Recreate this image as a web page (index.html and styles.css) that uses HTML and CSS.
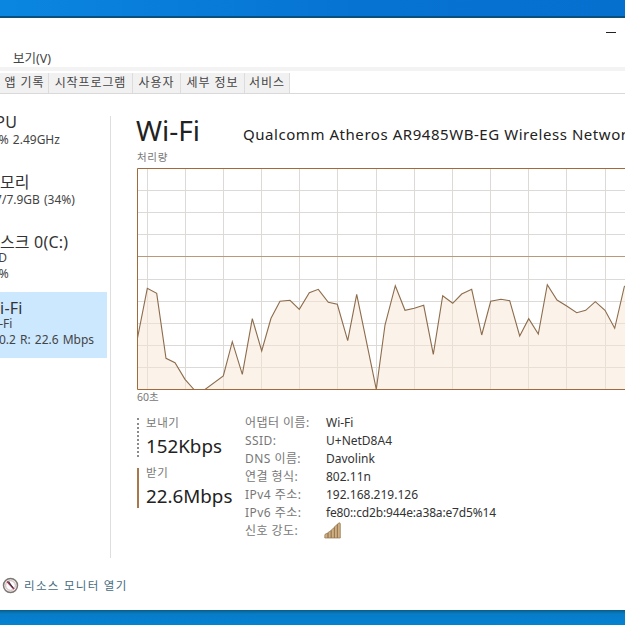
FILE: index.html
```html
<!DOCTYPE html>
<html lang="ko">
<head>
<meta charset="utf-8">
<title>작업 관리자</title>
<link rel="stylesheet" href="styles.css">
</head>
<body>
<div class="desk-top"></div>
<div class="window">
  <div class="titlebar"><span class="minimize"></span></div>
  <div class="menu"><span>보기(V)</span></div>
  <div class="menu-rule"></div>
  <div class="tabs">
    <span class="tab tab-first">앱 기록</span>
    <span class="tab tab-start">시작프로그램</span>
    <span class="tab tab-users">사용자</span>
    <span class="tab tab-detail">세부 정보</span>
    <span class="tab tab-service">서비스</span>
  </div>
  <div class="main">
    <aside class="side">
      <div class="items">
        <div class="item">
          <div class="item-title">CPU</div>
          <div class="item-sub">19% 2.49GHz</div>
        </div>
        <div class="item">
          <div class="item-title">메모리</div>
          <div class="item-sub">2.7/7.9GB (34%)</div>
        </div>
        <div class="item item-disk">
          <div class="item-title item-title-tight">디스크 0(C:)</div>
          <div class="item-sub">SSD</div>
          <div class="item-sub">10%</div>
        </div>
        <div class="item item-selected">
          <div class="item-title item-title-tight">Wi-Fi</div>
          <div class="item-sub">Wi-Fi</div>
          <div class="item-sub">S: 0.2 R: 22.6 Mbps</div>
        </div>
      </div>
    </aside>
    <section class="content">
      <header class="head">
        <h1>Wi-Fi</h1>
        <div class="adapter">Qualcomm Atheros AR9485WB-EG Wireless Network Adapter</div>
      </header>
      <div class="chart-label">처리량</div>
      <svg class="chart" width="488" height="223" viewBox="137 168 488 223" aria-hidden="true">
        <rect x="137.5" y="168.5" width="500" height="221" fill="#fff"/>
        <g class="grid">
          <path d="M147.5 168V390M185.5 168V390M223.5 168V390M261.5 168V390M299.5 168V390M337.5 168V390M376.5 168V390M414.5 168V390M452.5 168V390M490.5 168V390M528.5 168V390M566.5 168V390M605.5 168V390"/>
          <path d="M137 190.5H625M137 212.5H625M137 234.5H625M137 279.5H625M137 301.5H625M137 323.5H625M137 345.5H625M137 367.5H625"/>
        </g>
        <path class="mid" d="M137 256.5H625"/>
        <path class="area" d="M137.5 389.5V338L147.3 288.3L156.7 293.3L166 358.3L175 362.7L185 379.3L194 389.5L205 389.5L223.3 376L232.3 341.7L242.3 374.3L252.3 318.7L261.7 351L271 318.3L280 301.3L290 300.3L299.3 309.3L309.3 292.7L318.3 289.3L328.3 302.3L337.3 304.3L347.7 340.7L356.7 294.3L376.3 389.3L385 325L395.3 285.7L405 310.3L414.3 308.3L423.7 305.3L433.3 354.3L442.7 295.7L452.7 303.3L461.7 294L471.7 289.3L481.7 335L490.7 301.3L501 299.3L509.7 300.7L519.7 336L528.7 318.7L538.3 334L547.3 284.7L557 300L566.7 306L576.7 312.7L585.7 310.3L595.3 301.7L605 310.3L614.7 328.3L624.3 286.7L625 286V389.5Z"/>
        <path class="line" d="M137.5 338L147.3 288.3L156.7 293.3L166 358.3L175 362.7L185 379.3L194 389.5L205 389.5L223.3 376L232.3 341.7L242.3 374.3L252.3 318.7L261.7 351L271 318.3L280 301.3L290 300.3L299.3 309.3L309.3 292.7L318.3 289.3L328.3 302.3L337.3 304.3L347.7 340.7L356.7 294.3L376.3 389.3L385 325L395.3 285.7L405 310.3L414.3 308.3L423.7 305.3L433.3 354.3L442.7 295.7L452.7 303.3L461.7 294L471.7 289.3L481.7 335L490.7 301.3L501 299.3L509.7 300.7L519.7 336L528.7 318.7L538.3 334L547.3 284.7L557 300L566.7 306L576.7 312.7L585.7 310.3L595.3 301.7L605 310.3L614.7 328.3L624.3 286.7L625 286"/>
        <path class="frame" d="M625 168.500H137.500V389.500H625"/>
      </svg>
      <div class="chart-foot">60초</div>
      <div class="stats">
        <div class="rates">
          <div class="rate rate-send">
            <div class="rate-label">보내기</div>
            <div class="rate-value">152Kbps</div>
          </div>
          <div class="rate rate-recv">
            <div class="rate-label">받기</div>
            <div class="rate-value">22.6Mbps</div>
          </div>
        </div>
        <dl class="details">
          <dt>어댑터 이름:</dt><dd>Wi-Fi</dd>
          <dt>SSID:</dt><dd>U+NetD8A4</dd>
          <dt>DNS 이름:</dt><dd>Davolink</dd>
          <dt>연결 형식:</dt><dd>802.11n</dd>
          <dt>IPv4 주소:</dt><dd>192.168.219.126</dd>
          <dt>IPv6 주소:</dt><dd class="value-tight">fe80::cd2b:944e:a38a:e7d5%14</dd>
          <dt>신호 강도:</dt>
          <dd>
            <svg class="signal" width="17" height="17" viewBox="0 0 17 17" aria-hidden="true">
              <path class="signal-bar" d="M.8 16V13.200Q.8 12 2 11.800L4 11V16ZM4 16V10.500L7.200 8.600V16ZM7.200 16V8L10.400 5.500V16ZM10.400 16V4.800L13.400 2.400V16ZM13.400 16V2L15.300 .8Q16.300 .8 16.300 2V16Z"/>
            </svg>
          </dd>
        </dl>
      </div>
    </section>
  </div>
  <div class="foot">
    <svg class="monitor" width="17" height="17" viewBox="0 0 17 17" aria-hidden="true">
      <circle cx="8.500" cy="8.500" r="7" fill="#f4eeee" stroke="#7d7773" stroke-width="1.500"/>
      <circle cx="8.500" cy="8.500" r="4.800" fill="#fff" stroke="#c9b6b6"/>
      <path d="M5 4.500L12 12" stroke="#b0304a" stroke-width="1.600"/>
      <path d="M6.500 4.500L11 11" stroke="#35384a" stroke-width="1.200"/>
    </svg>
    <span class="foot-link">리소스 모니터 열기</span>
  </div>
</div>
<div class="desk-bottom"></div>
</body>
</html>
```

FILE: styles.css
```css
* { box-sizing: border-box; }
html, body { margin: 0; height: 625px; overflow: hidden; background: #fff; }
body {
  width: 625px;
  display: flex;
  flex-direction: column;
  font-family: "Noto Sans", "Noto Sans CJK KR", sans-serif;
  color: #222;
}
.desk-top {
  height: 18px;
  flex: none;
  background: linear-gradient(90deg, #0a86e0 0, #0672d2 60%, #0670cf 100%);
  border-bottom: 2px solid #0b4f7c;
}
.window {
  flex: 1;
  min-height: 0;
  width: 800px;
  margin-left: -15px;
  background: #fff;
  display: flex;
  flex-direction: column;
}
.titlebar {
  height: 31px;
  padding-top: 14px;
  padding-left: 621px;
}
.minimize { display: block; width: 10px; height: 1px; background: #222; }
.menu {
  height: 18px;
  padding-left: 28px;
  padding-top: 1px;
  font-size: 12.500px;
  line-height: 18px;
  color: #444;
}
.menu-rule { height: 4px; background: #f3f3f3; }
.tabs {
  height: 21px;
  margin-top: 2px;
  display: flex;
  border-bottom: 1px solid #d9d9d9;
}
.tab {
  height: 20px;
  background: #f1f1f1;
  border-right: 1px solid #dcdcdc;
  font-size: 12px;
  line-height: 20px;
  color: #444;
  text-align: center;
  letter-spacing: .9px;
  white-space: nowrap;
}
.tab-first { width: 64px; padding-left: 16px; }
.tab-start { width: 84px; }
.tab-users { width: 48px; }
.tab-detail { width: 64px; }
.tab-service { width: 45px; }
.main { display: flex; flex: 1; min-height: 0; }
.side {
  flex: none;
  width: 126px;
  height: 442px;
  margin-top: 22px;
  padding-right: 3px;
  border-right: 1px solid #dedede;
}
.items { margin-top: -4px; }
.item { height: 60px; }
.item-selected {
  height: 66px;
  padding-top: 6px;
  background: #cce8ff;
}
.item-title { font-size: 16px; line-height: 20px; letter-spacing: .2px; color: #333; white-space: nowrap; }
.item-title-tight { margin-bottom: -2px; }
.item-sub { font-size: 12px; line-height: 16px; word-spacing: 1px; color: #444; white-space: nowrap; }
.content { flex: 1; padding-left: 26px; min-width: 0; }
.head {
  height: 56px;
  display: flex;
  align-items: flex-start;
  padding-top: 17px;
}
.head h1 {
  margin: 0 0 0 -1px;
  width: 107px;
  font-size: 28px;
  font-weight: 400;
  line-height: 38px;
  color: #222;
}
.adapter {
  margin-top: 13px;
  font-size: 15px;
  line-height: 20px;
  color: #222;
  white-space: nowrap;
  letter-spacing: .55px;
}
.chart-label { height: 18px; font-size: 10.500px; line-height: 14px; color: #777; letter-spacing: .7px; }
.chart { display: block; }
.grid path { fill: none; stroke: #dcd9d6; stroke-width: 1; }
.mid { fill: none; stroke: #b89a78; stroke-width: 1; }
.area { fill: #f8e6d3; fill-opacity: .5; stroke: none; }
.line { fill: none; stroke: #8c6c4c; stroke-width: 1.100; }
.frame { fill: none; stroke: #a4693a; stroke-width: 1; }
.chart-foot { height: 24px; margin-top: -1px; font-size: 10.500px; line-height: 14px; color: #777; }
.stats { display: flex; }
.rates { width: 108px; flex: none; padding-top: 4px; }
.rate {
  height: 40px;
  padding-left: 7px;
  margin-bottom: 11px;
  border-left: 2px solid #a9784a;
}
.rate-send { height: 39px; border-left-style: dotted; border-left-color: #8c8c8c; }
.rate-label { margin-bottom: 8px; font-size: 11.500px; line-height: 9px; color: #777; letter-spacing: .6px; }
.rate-value { font-size: 18.800px; line-height: 22px; color: #222; white-space: nowrap; }
.details {
  margin: 0;
  display: grid;
  grid-template-columns: 81px auto;
  grid-auto-rows: 18px;
  align-content: start;
  font-size: 12px;
  line-height: 18px;
}
.details dt { color: #777; white-space: nowrap; letter-spacing: .45px; }
.details dd { margin: 0; color: #333; white-space: nowrap; }
.details .value-tight { letter-spacing: -.15px; }
.signal { display: block; margin-left: -2px; }
.signal-bar { fill: #cfae80; stroke: #8f7350; stroke-width: .7; }
.foot {
  height: 52px;
  display: flex;
  align-items: center;
  gap: 5px;
  padding-left: 17px;
  padding-top: 2px;
}
.monitor { display: block; flex: none; }
.foot-link { font-size: 11.500px; color: #446a80; letter-spacing: 1.300px; white-space: nowrap; }
.desk-bottom {
  height: 15px;
  flex: none;
  background: linear-gradient(180deg, #0a5f86 0, #087cc8 4px, #0482d2 100%);
}
```
